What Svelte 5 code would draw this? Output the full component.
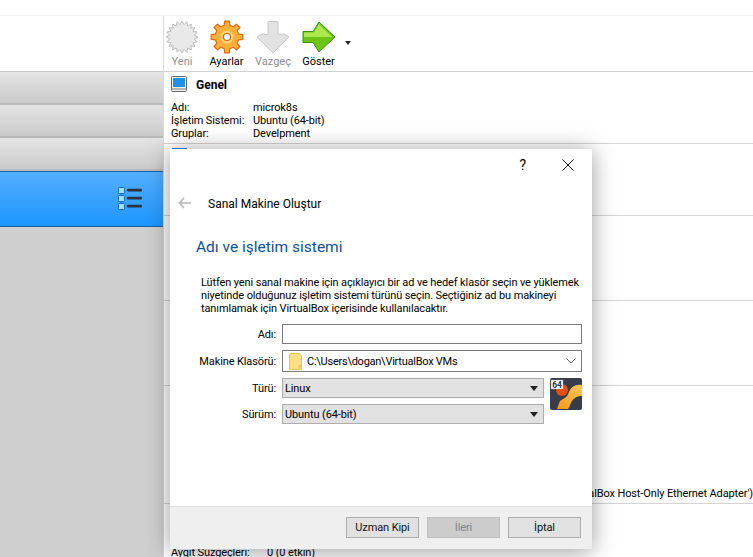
<script>
    const burst = (cx, cy, outer, inner, n) => {
        let pts = [];
        for (let i = 0; i < n * 2; i++) {
            const r = i % 2 ? inner : outer;
            const a = (Math.PI * i) / n;
            pts.push((cx + r * Math.sin(a)).toFixed(1) + ',' + (cy - r * Math.cos(a)).toFixed(1));
        }
        return pts.join(' ');
    };

    const gear = (cx, cy, outer, inner, n) => {
        let pts = [];
        const step = (Math.PI * 2) / n;
        for (let i = 0; i < n; i++) {
            const a = i * step;
            [[-0.3, inner], [-0.19, outer], [0.19, outer], [0.3, inner]].forEach(([o, r]) => {
                const t = a + o * step;
                pts.push((cx + r * Math.sin(t)).toFixed(1) + ',' + (cy - r * Math.cos(t)).toFixed(1));
            });
        }
        return pts.join(' ');
    };

    const tools = [
        { label: 'Yeni', off: true },
        { label: 'Ayarlar' },
        { label: 'Vazgeç', off: true },
        { label: 'Göster' }
    ];

    const infoRows = [
        ['Adı:', 'microk8s'],
        ['İşletim Sistemi:', 'Ubuntu (64-bit)'],
        ['Gruplar:', 'Develpment']
    ];
</script>

<div class="window">
    <div class="topbar"></div>
    <div class="main">
        <aside class="sidebar">
            <div class="sideTop"></div>
            <div class="sideRow"></div>
            <div class="sideRow"></div>
            <div class="sideRow"></div>
            <div class="sideRow selected">
                <svg width="26" height="26" viewBox="0 0 26 26">
                    {#each [1, 9, 17] as y}
                        <rect x="1.5" y={y + 0.5} width="6" height="6" rx="1" fill="#9be3fb" stroke="#1c63ad" />
                        <rect x="10" y={y + 1.8} width="15" height="2.6" rx="1" fill="#2f3338" />
                    {/each}
                </svg>
            </div>
        </aside>

        <section class="details">
            <div class="toolbar">
                {#each tools as tool, i}
                    <div class="tool" class:off={tool.off}>
                        <svg width="36" height="36" viewBox="0 0 36 36">
                            {#if i === 0}
                                <polygon points={burst(18, 18, 16, 12.5, 20)} fill="#e9e9e9" stroke="#bdbdbd" />
                            {:else if i === 1}
                                <polygon points={gear(18, 18, 16, 12, 8)} fill="#fbb03b" stroke="#dd6a10" stroke-width="1.2" stroke-linejoin="round" />
                                <circle cx="18" cy="18" r="6.5" fill="#ffd98a" opacity="0.8" />
                                <circle cx="18" cy="18" r="3.5" fill="#fff" stroke="#c9690f" stroke-width="1.2" />
                            {:else if i === 2}
                                <path d="M13 2.5h10v13l6-0.5 5 3-16 16-16-16 5-3 6 0.5z" fill="#e2e2e2" stroke="#c8c8c8" />
                            {:else}
                                <path d="M18 3 34 18 18 33 12 23.5H2V12.5H12Z" fill="#6cc414" stroke="#3f8f12" stroke-linejoin="round" />
                                <path d="M18 5 31 18H3V13.5H13Z" fill="#aee84f" />
                            {/if}
                        </svg>
                        <span>{tool.label}</span>
                    </div>
                {/each}
                <span class="caret"></span>
            </div>

            <div class="block first">
                <div class="blockHead">
                    <svg width="16" height="16" viewBox="0 0 16 16">
                        <rect x="0.5" y="0.5" width="15" height="15" rx="1" fill="#f2f2f2" stroke="#666" />
                        <rect x="2" y="2" width="12" height="9" fill="#1e90ee" />
                        <path d="M1 13h14" stroke="#777" />
                    </svg>
                    <b>Genel</b>
                </div>
                <div class="infoRows">
                    {#each infoRows as row}
                        <div class="infoRow"><span>{row[0]}</span><span>{row[1]}</span></div>
                    {/each}
                </div>
            </div>
            <div class="block second"><span class="blueMark"></span></div>
            <div class="block third"></div>
            <div class="block fourth"></div>
            <div class="block fifth">
                <div class="netRow">VirtualBox Host-Only Ethernet Adapter')</div>
            </div>
            <div class="block sixth">
                <div class="infoRow filter"><span>Aygıt Süzgeçleri:</span><span>0 (0 etkin)</span></div>
            </div>
        </section>
    </div>

    <div class="dialog">
        <div class="titleBar">
            <span class="help">?</span>
            <svg width="12" height="12" viewBox="0 0 12 12"><path d="M.5.5l11 11M11.5.5l-11 11" stroke="#111" fill="none" /></svg>
        </div>
        <div class="wizardHead">
            <svg width="14" height="12" viewBox="0 0 14 12"><path d="M6 1 1.5 6 6 11M1.5 6H13" stroke="#b9b9b9" stroke-width="1.6" fill="none" /></svg>
            <span>Sanal Makine Oluştur</span>
        </div>
        <div class="body">
            <h1>Adı ve işletim sistemi</h1>
            <p>Lütfen yeni sanal makine için açıklayıcı bir ad ve hedef klasör seçin ve yüklemek niyetinde olduğunuz işletim sistemi türünü seçin. Seçtiğiniz ad bu makineyi tanımlamak için VirtualBox içerisinde kullanılacaktır.</p>
            <div class="form">
                <label for="vmName">Adı:</label>
                <input id="vmName" type="text" />

                <span class="lbl">Makine Klasörü:</span>
                <div class="pathBox">
                    <svg width="13" height="17" viewBox="0 0 13 17">
                        <path d="M.5.5h10l2 2v14H.5z" fill="#fbdf87" stroke="#e5c35f" />
                        <path d="M10 16.5v-4h2.5" fill="#f5cf63" stroke="#e5c35f" />
                    </svg>
                    <span>C:\Users\dogan\VirtualBox VMs</span>
                    <svg class="chev" width="10" height="6" viewBox="0 0 10 6"><path d="M.5.5 5 5 9.5.5" stroke="#666" fill="none" /></svg>
                </div>

                <span class="lbl">Türü:</span>
                <div class="typeRow">
                    <div class="combo">Linux<span class="caret big"></span></div>
                    <svg class="osIcon" width="32" height="32" viewBox="0 0 32 32">
                        <defs>
                            <linearGradient id="swoosh" x1="0" y1="1" x2="1" y2="0">
                                <stop offset="0" stop-color="#f59a1c" />
                                <stop offset="1" stop-color="#fbc65a" />
                            </linearGradient>
                        </defs>
                        <rect width="32" height="32" rx="2" fill="#383c48" />
                        <circle cx="12" cy="12" r="6" fill="#e2500c" />
                        <path d="M32 7C25 6 21 9 19 14 17 20 13 21 10 23L7 31H18C21 27 21 22 25 20 27 18.5 29 18 32 18Z" fill="url(#swoosh)" />
                        <rect x="1" y="2" width="12" height="9" fill="#fff" stroke="#999" stroke-width=".5" />
                        <text x="2.2" y="9.8" class="badge">64</text>
                    </svg>
                </div>

                <span class="lbl">Sürüm:</span>
                <div class="typeRow">
                    <div class="combo">Ubuntu (64-bit)<span class="caret big"></span></div>
                </div>
            </div>
        </div>
        <div class="footer">
            <button type="button">Uzman Kipi</button>
            <button type="button" class="disabled" disabled>İleri</button>
            <button type="button">İptal</button>
        </div>
    </div>
</div>

<style>
    :global(body) {
        margin: 0;
        background: #fff;
    }

    .window {
        position: relative;
        width: 753px;
        height: 557px;
        overflow: hidden;
        background: #fff;
        font-family: "Roboto", "Open Sans", sans-serif;
        font-size: 11px;
        letter-spacing: -0.12px;
        color: #000;
    }

    .topbar {
        height: 15px;
        border-bottom: 1px solid #f0f0f0;
    }

    .main {
        display: flex;
        height: 541px;
    }

    .sidebar {
        width: 163px;
        flex: none;
        background: #cfcfcf;
        border-right: 1px solid #d8d8d8;
    }

    .sideTop {
        height: 55px;
        background: #fff;
        border-bottom: 1px solid #c9c9c9;
    }

    .sideRow {
        height: 31px;
        border-bottom: 2px solid #b9b9b9;
        background: linear-gradient(#e4e4e4, #cbcbcb);
    }

    .sideRow.selected {
        height: 54px;
        box-sizing: content-box;
        border-top: 1px solid #1565a8;
        border-bottom: 1px solid #1565a8;
        background: linear-gradient(#55aeff, #1c96ff);
        display: flex;
        align-items: center;
        justify-content: flex-end;
        padding-right: 20px;
    }

    .details {
        flex: 1;
        min-width: 0;
        overflow: hidden;
    }

    .toolbar {
        height: 55px;
        display: flex;
        align-items: flex-start;
        gap: 9.5px;
        border-bottom: 1px solid #d0d0d0;
    }

    .tool {
        width: 36px;
        display: flex;
        flex-direction: column;
        align-items: center;
        padding-top: 3px;
        white-space: nowrap;
        letter-spacing: 0;
    }

    .tool:nth-child(2) {
        margin: 0 1px 0 -1px;
    }

    .tool span {
        line-height: 14px;
    }

    .tool.off span {
        color: #8f8f8f;
    }

    .caret {
        width: 0;
        height: 0;
        border-left: 3.5px solid transparent;
        border-right: 3.5px solid transparent;
        border-top: 4px solid #222;
        margin: 25px 0 0 -1.5px;
    }

    .caret.big {
        margin: 0;
        border-left-width: 4.5px;
        border-right-width: 4.5px;
        border-top-width: 5px;
        margin-left: auto;
    }

    .block {
        box-sizing: border-box;
        border-bottom: 1px solid #d4d4d4;
        position: relative;
    }

    .first { height: 72px; padding: 4px 7px 0; }
    .second { height: 72px; padding-top: 4px; }
    .third { height: 85px; }
    .fourth { height: 85px; }
    .fifth { height: 118px; }
    .sixth { border-bottom: 0; padding-top: 42px; padding-left: 7px; }

    .blueMark {
        display: block;
        width: 15px;
        height: 10px;
        margin-left: 8px;
        background: #1f78d1;
    }

    .blockHead {
        display: flex;
        align-items: center;
        gap: 9px;
        height: 16px;
        font-size: 12px;
        letter-spacing: 0;
    }

    .blockHead b {
        margin-top: 2px;
    }

    .infoRows {
        margin-top: 9px;
    }

    .infoRow {
        display: flex;
        height: 13px;
        line-height: 13px;
    }

    .infoRow span:first-child {
        width: 82px;
        white-space: nowrap;
    }

    .filter {
        height: 14px;
    }

    .filter span:first-child {
        width: 96px;
    }

    .netRow {
        position: absolute;
        right: 0;
        bottom: 2px;
        white-space: nowrap;
        line-height: 14px;
    }

    .dialog {
        position: absolute;
        left: 170px;
        top: 149px;
        width: 422px;
        height: 400px;
        background: #fff;
        box-shadow: 0 2px 22px rgba(0, 0, 0, 0.4);
        display: flex;
        flex-direction: column;
    }

    .titleBar {
        height: 31px;
        display: flex;
        align-items: center;
        justify-content: flex-end;
        gap: 36px;
        padding-right: 18px;
    }

    .help {
        font-size: 14px;
    }

    .wizardHead {
        display: flex;
        align-items: center;
        gap: 16px;
        height: 46px;
        padding-left: 8px;
        font-size: 12px;
        letter-spacing: 0;
    }

    .wizardHead span {
        margin-top: 2px;
    }

    .body {
        flex: 1;
        padding: 0 10px 0 26px;
    }

    h1 {
        margin: 10px 0 0;
        font-size: 15.5px;
        font-weight: 400;
        line-height: 22px;
        letter-spacing: 0;
        color: #0d4f9e;
    }

    p {
        margin: 18px 0 0 5px;
        line-height: 13px;
    }

    .form {
        margin-top: 9px;
        display: grid;
        grid-template-columns: 80px 1fr;
        column-gap: 6px;
        row-gap: 6px;
        align-items: center;
    }

    .form label, .lbl {
        text-align: right;
        white-space: nowrap;
    }

    input, .pathBox {
        box-sizing: border-box;
        width: 300px;
        height: 20px;
        border: 1px solid #7a7a7a;
        background: #fff;
        margin: 0;
    }

    .pathBox {
        height: 22px;
        display: flex;
        align-items: center;
        padding: 0 5px 0 6px;
        gap: 5px;
        letter-spacing: -0.25px;
    }

    .chev {
        margin-left: auto;
    }

    .typeRow {
        display: flex;
        align-items: flex-start;
        gap: 6px;
        height: 20px;
        position: relative;
    }

    .combo {
        box-sizing: border-box;
        width: 262px;
        height: 20px;
        border: 1px solid #adadad;
        background: #e1e1e1;
        display: flex;
        align-items: center;
        padding: 0 5px 0 2px;
    }

    .osIcon {
        position: absolute;
        left: 268px;
        top: 0;
    }

    .badge {
        font-size: 8.5px;
        font-weight: 700;
        letter-spacing: 0;
        fill: #333;
    }

    .footer {
        height: 43px;
        box-sizing: border-box;
        background: #efefef;
        border-top: 1px solid #dfdfdf;
        display: flex;
        justify-content: flex-end;
        align-items: flex-start;
        gap: 8px;
        padding: 10px 11px 0 0;
    }

    button {
        width: 73px;
        height: 21px;
        padding: 0;
        border: 1px solid #adadad;
        background: #e1e1e1;
        font: inherit;
        letter-spacing: inherit;
        color: #111;
    }

    button.disabled {
        background: #ccc;
        border-color: #bfbfbf;
        color: #838383;
    }
</style>
